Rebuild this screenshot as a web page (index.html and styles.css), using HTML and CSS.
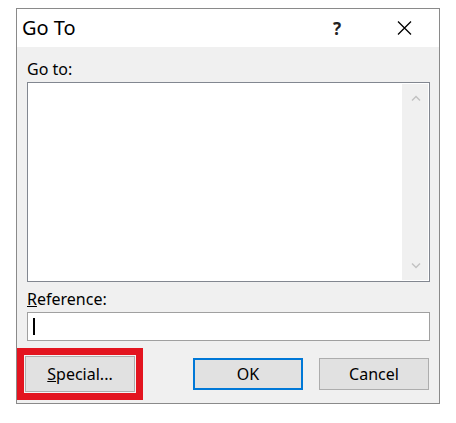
FILE: index.html
```html
<!DOCTYPE html>
<html lang="en">
<head>
  <meta charset="UTF-8">
  <title>Go To</title>
  <link rel="stylesheet" href="styles.css">
</head>
<body>

<div class="dialog">
  <div class="titlebar">
    <span class="title">Go To</span>
    <span class="cap-help">?</span>
    <span class="cap-close">
      <svg width="15" height="14" viewBox="0 0 15 14">
        <path d="M1 0.5 L14 13.5 M14 0.5 L1 13.5" stroke="#000" stroke-width="1.3" fill="none"/>
      </svg>
    </span>
  </div>

  <div class="body">
    <label class="label">Go to:</label>
    <div class="listbox">
      <div class="list-items"></div>
      <div class="scrollbar">
        <svg width="10" height="6" viewBox="0 0 10 6">
          <path d="M1 5.5 L5 1.5 L9 5.5" stroke="#c2c2c2" stroke-width="1.4" fill="none"/>
        </svg>
        <svg width="10" height="6" viewBox="0 0 10 6">
          <path d="M1 0.5 L5 4.5 L9 0.5" stroke="#c2c2c2" stroke-width="1.4" fill="none"/>
        </svg>
      </div>
    </div>

    <label class="label label-ref"><u>R</u>eference:</label>
    <div class="ref-input"><span class="caret"></span></div>

    <div class="buttons">
      <span class="highlight">
        <button class="btn btn-special"><u>S</u>pecial...</button>
      </span>
      <div class="right-buttons">
        <button class="btn btn-default">OK</button>
        <button class="btn">Cancel</button>
      </div>
    </div>
  </div>
</div>

</body>
</html>
```

FILE: styles.css
```css
body {
  margin: 0;
  padding: 8px 0 0 16px;
  background-color: #fff;
  font-family: "Noto Sans", "Open Sans", sans-serif;
  color: #000;
}

.dialog {
  width: 422px;
  height: 394px;
  border: 1px solid #8a8a8a;
  background-color: #f0f0f0;
  display: flex;
  flex-direction: column;
}

.titlebar {
  height: 38px;
  background-color: #fff;
  display: flex;
  align-items: center;
}

.title {
  flex: 1;
  padding-left: 5px;
  font-size: 20px;
  line-height: 38px;
}

.cap-help {
  width: 46px;
  text-align: center;
  font-size: 17px;
  font-weight: bold;
  color: #222;
}

.cap-close {
  width: 70px;
  margin-left: 9px;
  display: flex;
  justify-content: center;
}

.body {
  flex: 1;
  padding: 12px 9px 0 10px;
  display: flex;
  flex-direction: column;
}

.label {
  display: block;
  font-size: 16px;
  line-height: 20px;
  margin-bottom: 3px;
}

.label-ref {
  margin-top: 7px;
}

.listbox {
  height: 198px;
  border: 1px solid #828790;
  background-color: #fff;
  display: flex;
}

.list-items {
  flex: 1;
}

.scrollbar {
  width: 25px;
  margin: 1px;
  background-color: #f0f0f0;
  display: flex;
  flex-direction: column;
  justify-content: space-between;
  align-items: center;
  padding: 11px 0 11px 1px;
}

.ref-input {
  height: 27px;
  border: 1px solid #a0a0a0;
  background-color: #fff;
  display: flex;
  align-items: center;
  padding-left: 5px;
}

.caret {
  width: 2px;
  height: 17px;
  background-color: #000;
}

.buttons {
  margin-top: 7px;
  display: flex;
  justify-content: space-between;
  align-items: center;
}

.highlight {
  margin-left: -10px;
  border: 7px solid #e3141f;
  padding: 1px;
  background-color: #f4f4f4;
  display: flex;
}

.right-buttons {
  display: flex;
  gap: 16px;
  margin-right: 1px;
}

.btn {
  width: 110px;
  height: 32px;
  border: 1px solid #adadad;
  background-color: #e1e1e1;
  font-family: "Noto Sans", "Open Sans", sans-serif;
  font-size: 16px;
  color: #000;
  padding: 0;
}

.btn-special {
  height: 36px;
}

.btn-default {
  border: 2px solid #0078d7;
}
```
